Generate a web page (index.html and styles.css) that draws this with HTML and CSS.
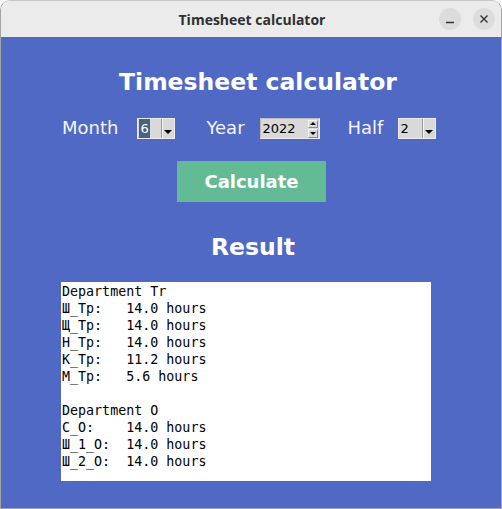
FILE: index.html
```html
<!DOCTYPE html>
<html>
<head>
<meta charset="utf-8">
<title>Timesheet calculator</title>
<link rel="stylesheet" href="styles.css">
</head>
<body>
<div class="window">
  <div class="titlebar">
    <div class="title">Timesheet calculator</div>
    <div class="wbtns">
      <div class="wbtn"><svg width="22" height="22" viewBox="0 0 22 22"><line x1="7" y1="14.5" x2="15" y2="14.5" stroke="#333" stroke-width="1.4"/></svg></div>
      <div class="wbtn"><svg width="22" height="22" viewBox="0 0 22 22"><path d="M7.5 7.5 L14.5 14.5 M14.5 7.5 L7.5 14.5" stroke="#333" stroke-width="1.4"/></svg></div>
    </div>
  </div>
  <div class="content">
    <h1 class="heading">Timesheet calculator</h1>
    <div class="controls">
      <span class="label">Month</span>
      <div class="combo combo-month">
        <span class="combo-val"><span class="sel">6</span></span>
        <span class="combo-arrow"><span class="tri"></span></span>
      </div>
      <span class="label label-year">Year</span>
      <div class="spin">
        <span class="spin-val">2022</span>
        <span class="spin-btns">
          <span class="sbtn"><span class="tri-up"></span></span>
          <span class="sbtn"><span class="tri-dn"></span></span>
        </span>
      </div>
      <span class="label label-half">Half</span>
      <div class="combo combo-half">
        <span class="combo-val">2</span>
        <span class="combo-arrow"><span class="tri"></span></span>
      </div>
    </div>
    <button class="calc">Calculate</button>
    <h2 class="result-title">Result</h2>
    <pre class="result">Department Tr
Ш_Тр:   14.0 hours
Щ_Тр:   14.0 hours
Н_Тр:   14.0 hours
К_Тр:   11.2 hours
М_Тр:   5.6 hours

Department О
С_О:    14.0 hours
Ш_1_О:  14.0 hours
Ш_2_О:  14.0 hours</pre>
  </div>
</div>
</body>
</html>
```
FILE: styles.css
```css
html, body {
  margin: 0;
  padding: 0;
  background: #ffffff;
}
.window {
  width: 502px;
  height: 509px;
  box-sizing: border-box;
  border: 1px solid #a4a4a4;
  border-top-color: #c8c8c8;
  border-radius: 10px 10px 0 0;
  overflow: hidden;
  display: flex;
  flex-direction: column;
}
.titlebar {
  height: 36px;
  flex: none;
  background: #ebebeb;
  position: relative;
  display: flex;
  align-items: center;
  justify-content: center;
}
.title {
  font-family: "Open Sans", "DejaVu Sans", sans-serif;
  font-weight: 700;
  font-size: 14px;
  color: #303030;
  margin-left: 2px;
}
.wbtns {
  position: absolute;
  right: 6px;
  top: 7px;
  display: flex;
  gap: 12px;
}
.wbtn {
  width: 22px;
  height: 22px;
  border-radius: 50%;
  background: #dcdcdc;
}
.wbtn svg { display: block; }
.content {
  flex: 1;
  background: #5069c4;
  display: flex;
  flex-direction: column;
  align-items: center;
  font-family: "DejaVu Sans", sans-serif;
  color: #ffffff;
}
.heading {
  margin: 30px 0 0 14px;
  font-size: 23.5px;
  line-height: 30px;
  font-weight: 700;
}
.controls {
  align-self: flex-start;
  margin: 20px 0 0 61px;
  height: 22px;
  display: flex;
  align-items: center;
}
.label {
  font-size: 18px;
  line-height: 22px;
  color: #f4f6ff;
}
.combo {
  margin-left: 19px;
  width: 38px;
  height: 21px;
  box-sizing: border-box;
  border: 1px solid #ececec;
  background: #d9d9d9;
  display: flex;
  font-size: 13px;
  color: #000;
}
.combo-half { margin-left: 15px; width: 38px; }
.combo-val {
  flex: 1;
  line-height: 19px;
  padding-left: 1px;
}
.sel {
  display: inline-block;
  background: #46637f;
  color: #ffffff;
  padding: 0 1px;
  height: 19px;
}
.combo-arrow {
  width: 13px;
  border-left: 1px solid #9c9c9c;
  box-shadow: inset 1px 0 0 #f2f2f2;
  display: flex;
  align-items: flex-end;
  justify-content: center;
  padding-bottom: 4px;
  box-sizing: border-box;
}
.tri {
  width: 0;
  height: 0;
  border-left: 4px solid transparent;
  border-right: 4px solid transparent;
  border-top: 4px solid #000;
}
.label-year { margin-left: 31px; }
.label-half { margin-left: 28px; }
.spin {
  margin-left: 15px;
  width: 60px;
  height: 21px;
  box-sizing: border-box;
  border: 1px solid #ececec;
  border-top-color: #bdbdbd;
  border-left-color: #bdbdbd;
  background: #d9d9d9;
  display: flex;
  font-size: 13px;
  color: #000;
}
.spin-val {
  flex: 1;
  line-height: 19px;
  padding-left: 2px;
}
.spin-btns {
  width: 11px;
  display: flex;
  flex-direction: column;
  padding: 1px 1px 0 0;
  box-sizing: border-box;
  gap: 1px;
}
.sbtn {
  flex: 1;
  border: 1px solid #8a8a8a;
  border-top-color: #f4f4f4;
  border-left-color: #f4f4f4;
  display: flex;
  align-items: center;
  justify-content: center;
}
.tri-up {
  width: 0; height: 0;
  border-left: 3px solid transparent;
  border-right: 3px solid transparent;
  border-bottom: 3px solid #000;
}
.tri-dn {
  width: 0; height: 0;
  border-left: 3px solid transparent;
  border-right: 3px solid transparent;
  border-top: 3px solid #000;
}
.calc {
  margin-top: 22px;
  margin-left: 1px;
  width: 149px;
  height: 41px;
  border: none;
  background: #63bb95;
  color: #ffffff;
  font-family: "DejaVu Sans", sans-serif;
  font-weight: 700;
  font-size: 18px;
  padding: 0;
}
.result-title {
  margin: 30px 0 0 4px;
  font-size: 23.5px;
  line-height: 30px;
  font-weight: 700;
}
.result {
  align-self: flex-start;
  margin: 20px 0 0 60px;
  width: 370px;
  height: 199px;
  box-sizing: border-box;
  background: #ffffff;
  color: #000000;
  font-family: "DejaVu Sans Mono", monospace;
  font-size: 13.33px;
  line-height: 17px;
  padding: 1px 1px 0 1px;
  overflow: hidden;
}
```
